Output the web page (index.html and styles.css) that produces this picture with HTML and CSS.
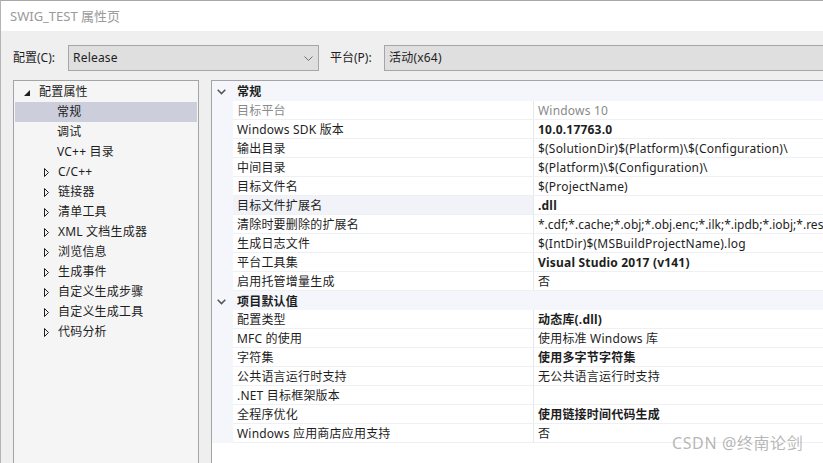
FILE: index.html
```html
<!DOCTYPE html>
<html lang="zh-CN">
<head>
<meta charset="utf-8">
<title>SWIG_TEST 属性页</title>
<link rel="stylesheet" href="styles.css">
</head>
<body>
<div class="window">
  <div class="titlebar">SWIG_TEST 属性页</div>
  <div class="client">
    <div class="configbar">
      <span class="cfg-label">配置(C):</span>
      <div class="combo combo-config">
        <span class="combo-text">Release</span>
        <svg class="combo-arrow" width="9" height="5" viewBox="0 0 9 5"><polyline points="0.5,0.5 4.5,4.5 8.5,0.5" fill="none" stroke="#6e6e6e" stroke-width="1"/></svg>
      </div>
      <span class="cfg-label plat-label">平台(P):</span>
      <div class="combo combo-platform">
        <span class="combo-text">活动(x64)</span>
      </div>
    </div>
    <div class="panes">
      <div class="tree">
        <div class="tnode root">
          <svg class="tri-open" width="6" height="6" viewBox="0 0 6 6"><polygon points="6,0 6,6 0,6" fill="#1e1e1e"/></svg>
          <span>配置属性</span>
        </div>
        <div class="tnode child selected"><span>常规</span></div>
        <div class="tnode child"><span>调试</span></div>
        <div class="tnode child"><span>VC++ 目录</span></div>
        <div class="tnode child exp"><svg class="tri-closed" width="5" height="9" viewBox="0 0 5 9"><polygon points="0.5,0.5 4.5,4.5 0.5,8.5" fill="none" stroke="#1e1e1e" stroke-width="1"/></svg><span>C/C++</span></div>
        <div class="tnode child exp"><svg class="tri-closed" width="5" height="9" viewBox="0 0 5 9"><polygon points="0.5,0.5 4.5,4.5 0.5,8.5" fill="none" stroke="#1e1e1e" stroke-width="1"/></svg><span>链接器</span></div>
        <div class="tnode child exp"><svg class="tri-closed" width="5" height="9" viewBox="0 0 5 9"><polygon points="0.5,0.5 4.5,4.5 0.5,8.5" fill="none" stroke="#1e1e1e" stroke-width="1"/></svg><span>清单工具</span></div>
        <div class="tnode child exp"><svg class="tri-closed" width="5" height="9" viewBox="0 0 5 9"><polygon points="0.5,0.5 4.5,4.5 0.5,8.5" fill="none" stroke="#1e1e1e" stroke-width="1"/></svg><span>XML 文档生成器</span></div>
        <div class="tnode child exp"><svg class="tri-closed" width="5" height="9" viewBox="0 0 5 9"><polygon points="0.5,0.5 4.5,4.5 0.5,8.5" fill="none" stroke="#1e1e1e" stroke-width="1"/></svg><span>浏览信息</span></div>
        <div class="tnode child exp"><svg class="tri-closed" width="5" height="9" viewBox="0 0 5 9"><polygon points="0.5,0.5 4.5,4.5 0.5,8.5" fill="none" stroke="#1e1e1e" stroke-width="1"/></svg><span>生成事件</span></div>
        <div class="tnode child exp"><svg class="tri-closed" width="5" height="9" viewBox="0 0 5 9"><polygon points="0.5,0.5 4.5,4.5 0.5,8.5" fill="none" stroke="#1e1e1e" stroke-width="1"/></svg><span>自定义生成步骤</span></div>
        <div class="tnode child exp"><svg class="tri-closed" width="5" height="9" viewBox="0 0 5 9"><polygon points="0.5,0.5 4.5,4.5 0.5,8.5" fill="none" stroke="#1e1e1e" stroke-width="1"/></svg><span>自定义生成工具</span></div>
        <div class="tnode child exp"><svg class="tri-closed" width="5" height="9" viewBox="0 0 5 9"><polygon points="0.5,0.5 4.5,4.5 0.5,8.5" fill="none" stroke="#1e1e1e" stroke-width="1"/></svg><span>代码分析</span></div>
      </div>
      <div class="grid">
        <div class="section">
          <svg class="chev" width="9" height="6" viewBox="0 0 9 6"><polyline points="0.7,0.7 4.5,4.6 8.3,0.7" fill="none" stroke="#555" stroke-width="1.5"/></svg>
          <span>常规</span>
        </div>
        <div class="row disabled"><div class="name">目标平台</div><div class="value">Windows 10</div></div>
        <div class="row"><div class="name">Windows SDK 版本</div><div class="value bold">10.0.17763.0</div></div>
        <div class="row"><div class="name">输出目录</div><div class="value">$(SolutionDir)$(Platform)\$(Configuration)\</div></div>
        <div class="row"><div class="name">中间目录</div><div class="value">$(Platform)\$(Configuration)\</div></div>
        <div class="row"><div class="name">目标文件名</div><div class="value">$(ProjectName)</div></div>
        <div class="row hover"><div class="name">目标文件扩展名</div><div class="value bold">.dll</div></div>
        <div class="row"><div class="name">清除时要删除的扩展名</div><div class="value tight">*.cdf;*.cache;*.obj;*.obj.enc;*.ilk;*.ipdb;*.iobj;*.reso</div></div>
        <div class="row"><div class="name">生成日志文件</div><div class="value">$(IntDir)$(MSBuildProjectName).log</div></div>
        <div class="row"><div class="name">平台工具集</div><div class="value bold">Visual Studio 2017 (v141)</div></div>
        <div class="row"><div class="name">启用托管增量生成</div><div class="value">否</div></div>
        <div class="section second">
          <svg class="chev" width="9" height="6" viewBox="0 0 9 6"><polyline points="0.7,0.7 4.5,4.6 8.3,0.7" fill="none" stroke="#555" stroke-width="1.5"/></svg>
          <span>项目默认值</span>
        </div>
        <div class="row"><div class="name">配置类型</div><div class="value bold">动态库(.dll)</div></div>
        <div class="row"><div class="name">MFC 的使用</div><div class="value">使用标准 Windows 库</div></div>
        <div class="row"><div class="name">字符集</div><div class="value bold">使用多字节字符集</div></div>
        <div class="row"><div class="name">公共语言运行时支持</div><div class="value">无公共语言运行时支持</div></div>
        <div class="row"><div class="name">.NET 目标框架版本</div><div class="value"></div></div>
        <div class="row"><div class="name">全程序优化</div><div class="value bold">使用链接时间代码生成</div></div>
        <div class="row"><div class="name">Windows 应用商店应用支持</div><div class="value">否</div></div>
        <div class="grid-rest"></div>
      </div>
    </div>
  </div>
</div>
<div class="watermark">CSDN @终南论剑</div>
</body>
</html>
```
FILE: styles.css
```css
html, body {
  margin: 0;
  padding: 0;
  width: 823px;
  height: 463px;
  overflow: hidden;
  background: #efefef;
}
body {
  font-family: "Noto Sans", "Noto Sans CJK SC", sans-serif;
  font-size: 12px;
  letter-spacing: 0.2px;
  color: #1e1e1e;
  position: relative;
}
.window {
  width: 823px;
  height: 480px;
  border-top: 1px solid #a8a8a8;
  border-left: 1px solid #b4b4b4;
  display: flex;
  flex-direction: column;
  box-sizing: border-box;
}
.titlebar {
  height: 30px;
  flex: none;
  background: #ffffff;
  color: #9a9a9a;
  font-size: 13px;
  letter-spacing: 0;
  line-height: 30px;
  padding-left: 9px;
}
.client {
  flex: 1;
  background: #efefef;
  display: flex;
  flex-direction: column;
  min-height: 0;
}
.configbar {
  display: flex;
  align-items: center;
  padding: 14px 0 0 12px;
  height: 26px;
  flex: none;
}
.cfg-label {
  width: 55px;
  flex: none;
  line-height: 26px;
  letter-spacing: 0;
}
.plat-label {
  width: 54px;
  margin-left: 11px;
}
.combo {
  height: 26px;
  box-sizing: border-box;
  border: 1px solid #a6a6a6;
  border-right: none;
  background: #dfdfdf;
  display: flex;
  align-items: center;
  padding-left: 4px;
}
.combo-config {
  width: 251px;
  flex: none;
  justify-content: space-between;
  padding-right: 5px;
  border-right: 1px solid #a6a6a6;
}
.combo-platform {
  flex: 1;
}
.combo-text {
  line-height: 24px;
}
.combo-arrow {
  display: block;
}
.panes {
  flex: 1;
  display: flex;
  gap: 12px;
  margin-top: 9px;
  padding-left: 12px;
  min-height: 0;
}
.tree {
  width: 186px;
  flex: none;
  box-sizing: border-box;
  border: 1px solid #a4a4a4;
  background: #f5f5f5;
  padding: 1px 1px 0 1px;
}
.tnode {
  height: 20px;
  display: flex;
  align-items: center;
  line-height: 20px;
  white-space: nowrap;
}
.tnode.root {
  padding-left: 9px;
}
.tnode.root .tri-open {
  margin-right: 9px;
  margin-top: 2px;
}
.tnode.child {
  padding-left: 42px;
}
.tnode.child.exp {
  padding-left: 29px;
}
.tnode .tri-closed {
  margin-right: 9px;
}
.tnode.selected {
  background: #cccedb;
}
.grid {
  flex: 1;
  border-top: 1px solid #a4a4a4;
  border-left: 1px solid #a4a4a4;
  background: #f4f6fb;
  display: flex;
  flex-direction: column;
  min-width: 0;
}
.section {
  height: 20px;
  box-sizing: border-box;
  padding-top: 1px;
  display: flex;
  align-items: center;
  font-weight: bold;
  line-height: 19px;
  flex: none;
}
.section.second {
  height: 19px;
  padding-top: 2px;
}
.section .chev {
  margin-left: 5px;
  margin-right: 11px;
}
.row {
  height: 19px;
  box-sizing: border-box;
  margin-left: 21px;
  display: flex;
  border-bottom: 1px solid #eef0f4;
  background: #ffffff;
  flex: none;
  line-height: 17px;
  padding-top: 1px;
  white-space: nowrap;
}
.row .name {
  width: 301px;
  flex: none;
  box-sizing: border-box;
  padding-left: 4px;
  border-right: 1px solid #e6e8ee;
  margin-top: -1px;
  padding-top: 1px;
  overflow: hidden;
}
.row .value {
  flex: 1;
  padding-left: 4px;
  overflow: hidden;
}
.row .value.tight {
  letter-spacing: 0;
}
.row.hover .name {
  background: #f1f3f8;
}
.row.disabled .name,
.row.disabled .value {
  color: #8a8a8a;
}
.bold {
  font-weight: bold;
}
.grid-rest {
  flex: 1;
  background: #ffffff;
}
.watermark {
  position: absolute;
  left: 672px;
  top: 433px;
  font-size: 16px;
  letter-spacing: 0.6px;
  line-height: 20px;
  color: rgba(120, 120, 120, 0.55);
  white-space: nowrap;
}
```
